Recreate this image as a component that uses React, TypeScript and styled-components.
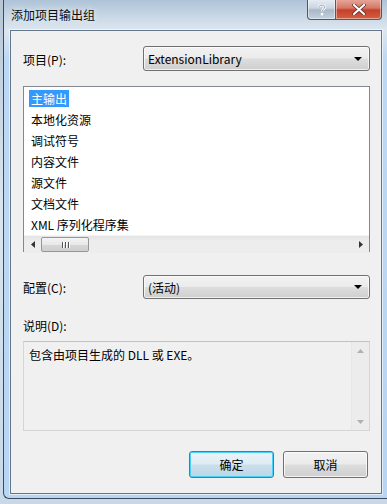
import styled, { createGlobalStyle } from "styled-components";

const GlobalStyle = createGlobalStyle`
  html, body {
    margin: 0;
    padding: 0;
    overflow: hidden;
    background: #8fa6bd;
  }
  body {
    font-family: "Noto Sans", "Noto Sans CJK SC", sans-serif;
    font-size: 12px;
    color: #000;
  }
`;

const uiFont = `"Noto Sans CJK SC", "Noto Sans", sans-serif`;

const Desktop = styled.div`
  width: 387px;
  height: 504px;
  padding-left: 3px;
  box-sizing: border-box;
  background: linear-gradient(180deg, #b7c6d6 0%, #d9e4ee 40%, #c8d8e8 100%);
  overflow: hidden;
`;

const Frame = styled.div`
  width: 395px;
  height: 499px;
  box-sizing: border-box;
  border-left: 1px solid #3e4a56;
  border-bottom: 1px solid #3e4a56;
  border-radius: 0 0 0 6px;
  background: linear-gradient(
    180deg,
    #aec3d8 0px,
    #c9d7e5 16px,
    #dce6ef 30px,
    #bcd8f4 60px,
    #b8d5f3 100%
  );
  display: flex;
  flex-direction: column;
  padding: 0 0 0 6px;
`;

const TitleBar = styled.div`
  height: 30px;
  display: flex;
  align-items: flex-start;
  justify-content: space-between;
  padding-right: 16px;
`;

const Title = styled.div`
  font-family: ${uiFont};
  font-size: 12px;
  line-height: 14px;
  padding-top: 8px;
  padding-left: 1px;
  color: #0b0b0b;
  text-shadow: 0 0 6px rgba(255, 255, 255, 0.9);
`;

const Captions = styled.div`
  display: flex;
  margin-top: -1px;
`;

const CaptionButton = styled.div<{ $close?: boolean }>`
  width: ${({ $close }) => ($close ? "46px" : "29px")};
  height: 21px;
  box-sizing: border-box;
  border: 1px solid #4b5a69;
  border-top: none;
  border-radius: ${({ $close }) => ($close ? "0 0 4px 0" : "0 0 0 4px")};
  border-left: ${({ $close }) => ($close ? "none" : "1px solid #4b5a69")};
  background: ${({ $close }) =>
    $close
      ? "linear-gradient(180deg, #e9a99c 0%, #d47866 45%, #c4412a 55%, #d2603f 100%)"
      : "linear-gradient(180deg, #e8eef5 0%, #cad5e1 45%, #a9b8c8 55%, #c3d1df 100%)"};
  box-shadow: inset 0 0 0 1px rgba(255, 255, 255, 0.45);
  display: flex;
  align-items: center;
  justify-content: center;
`;

const Client = styled.div`
  width: 372px;
  height: 464px;
  box-sizing: border-box;
  background: #f0f0f0;
  border: 1px solid #65778a;
  box-shadow: 0 0 0 1px rgba(255, 255, 255, 0.55);
  padding: 15px 11px 0 12px;
  display: flex;
  flex-direction: column;
`;

const FieldRow = styled.div<{ $gap?: number }>`
  display: flex;
  align-items: center;
  margin-top: ${({ $gap }) => $gap ?? 0}px;
`;

const Label = styled.div`
  width: 120px;
  font-family: ${uiFont};
  font-size: 12px;
  line-height: 16px;
  padding-top: 2px;
`;

const Combo = styled.div<{ $h: number }>`
  flex: 1;
  height: ${({ $h }) => $h}px;
  box-sizing: border-box;
  border: 1px solid #707070;
  border-radius: 3px;
  background: linear-gradient(180deg, #f2f2f2 0%, #ebebeb 48%, #dddddd 52%, #cfcfcf 100%);
  box-shadow: inset 0 0 0 1px rgba(255, 255, 255, 0.7);
  display: flex;
  align-items: center;
  justify-content: space-between;
  padding: 0 7px 0 4px;
  font-family: ${uiFont};
  font-size: 12px;
`;

const ArrowDown = styled.span`
  width: 0;
  height: 0;
  border-left: 4px solid transparent;
  border-right: 4px solid transparent;
  border-top: 4px solid #000;
`;

const ListBox = styled.div`
  margin-top: 15px;
  height: 166px;
  box-sizing: border-box;
  border: 1px solid #828790;
  background: #fff;
  display: flex;
  flex-direction: column;
`;

const ListItems = styled.div`
  flex: 1;
  padding: 1px 0 0 5px;
`;

const ListItem = styled.div`
  height: 21px;
  display: flex;
  align-items: center;
  font-family: ${uiFont};
  font-size: 12px;
`;

const ItemText = styled.span<{ $selected?: boolean }>`
  padding: 0 2px;
  line-height: 17px;
  background: ${({ $selected }) => ($selected ? "#3399ff" : "transparent")};
  color: ${({ $selected }) => ($selected ? "#fff" : "#000")};
`;

const HScroll = styled.div`
  height: 17px;
  background: linear-gradient(180deg, #e3e3e3 0%, #ededed 30%, #ededed 100%);
  border-top: 1px solid #f5f5f5;
  display: flex;
  align-items: center;
`;

const ScrollArrow = styled.div`
  width: 17px;
  height: 17px;
  display: flex;
  align-items: center;
  justify-content: center;
`;

const Thumb = styled.div`
  width: 48px;
  height: 15px;
  box-sizing: border-box;
  border: 1px solid #979797;
  border-radius: 2px;
  background: linear-gradient(180deg, #f4f4f4 0%, #e8e8e8 50%, #d6d6d6 51%, #cfcfcf 100%);
  display: flex;
  align-items: center;
  justify-content: center;
  gap: 2px;
`;

const Grip = styled.span`
  width: 1px;
  height: 6px;
  background: #555;
  box-shadow: 1px 0 0 #fff;
`;

const Track = styled.div`
  flex: 1;
`;

const DescLabel = styled.div`
  margin-top: 19px;
  font-family: ${uiFont};
  font-size: 12px;
  line-height: 16px;
`;

const DescBox = styled.div`
  margin-top: 7px;
  height: 90px;
  box-sizing: border-box;
  border: 1px solid #d5d5d5;
  border-top-color: #c2c2c2;
  background: #f0f0f0;
  display: flex;
`;

const DescText = styled.div`
  flex: 1;
  padding: 5px 5px;
  font-family: ${uiFont};
  font-size: 12px;
  line-height: 16px;
`;

const VScroll = styled.div`
  width: 17px;
  border-left: 1px solid #e6e6e6;
  background: #ececec;
  display: flex;
  flex-direction: column;
  justify-content: space-between;
`;

const ButtonRow = styled.div`
  margin-top: 20px;
  display: flex;
  justify-content: flex-end;
  gap: 9px;
  padding-right: 2px;
`;

const Button = styled.div<{ $default?: boolean }>`
  width: 85px;
  height: 27px;
  box-sizing: border-box;
  border: 1px solid ${({ $default }) => ($default ? "#3c7fb1" : "#707070")};
  border-radius: 3px;
  background: ${({ $default }) =>
    $default
      ? "linear-gradient(180deg, #eaf3f8 0%, #dfecf3 48%, #c9dfec 52%, #bcd6e6 100%)"
      : "linear-gradient(180deg, #f2f2f2 0%, #ebebeb 48%, #dddddd 52%, #cfcfcf 100%)"};
  box-shadow: ${({ $default }) =>
    $default ? "inset 0 0 0 1px #48d2fb" : "inset 0 0 0 1px rgba(255,255,255,0.75)"};
  display: flex;
  align-items: center;
  justify-content: center;
  font-family: ${uiFont};
  font-size: 12px;
`;

const items = ["主输出", "本地化资源", "调试符号", "内容文件", "源文件", "文档文件", "XML 序列化程序集"];

const Tri = ({ dir, color }: { dir: "l" | "r" | "u" | "d"; color: string }) => {
  const pts = {
    l: "4,0 4,7 0,3.5",
    r: "0,0 0,7 4,3.5",
    u: "0,4 7,4 3.5,0",
    d: "0,0 7,0 3.5,4",
  }[dir];
  const w = dir === "l" || dir === "r" ? 4 : 7;
  const h = dir === "l" || dir === "r" ? 7 : 4;
  return (
    <svg width={w} height={h} viewBox={`0 0 ${w} ${h}`}>
      <polygon points={pts} fill={color} />
    </svg>
  );
};

export default function App() {
  return (
    <>
      <GlobalStyle />
      <Desktop>
        <Frame>
          <TitleBar>
            <Title>添加项目输出组</Title>
            <Captions>
              <CaptionButton>
                <svg width="10" height="13" viewBox="0 0 10 13">
                  <path
                    d="M2 4 C2 1.5 8 1.5 8 4 C8 6 5 6 5 8.5"
                    stroke="#fff"
                    strokeWidth="2.4"
                    fill="none"
                  />
                  <rect x="3.8" y="10" width="2.4" height="2.4" fill="#fff" />
                  <path
                    d="M2 4 C2 1.5 8 1.5 8 4 C8 6 5 6 5 8.5"
                    stroke="#3d4a57"
                    strokeWidth="1"
                    fill="none"
                    opacity="0.5"
                  />
                </svg>
              </CaptionButton>
              <CaptionButton $close>
                <svg width="14" height="11" viewBox="0 0 14 11">
                  <path
                    d="M2 1 L12 10 M12 1 L2 10"
                    stroke="#5a2a22"
                    strokeWidth="3.6"
                    strokeLinecap="round"
                  />
                  <path
                    d="M2 1 L12 10 M12 1 L2 10"
                    stroke="#fff"
                    strokeWidth="2.2"
                    strokeLinecap="round"
                  />
                </svg>
              </CaptionButton>
            </Captions>
          </TitleBar>
          <Client>
            <FieldRow>
              <Label>项目(P):</Label>
              <Combo $h={25}>
                <span>ExtensionLibrary</span>
                <ArrowDown />
              </Combo>
            </FieldRow>
            <ListBox>
              <ListItems>
                {items.map((it, i) => (
                  <ListItem key={it}>
                    <ItemText $selected={i === 0}>{it}</ItemText>
                  </ListItem>
                ))}
              </ListItems>
              <HScroll>
                <ScrollArrow>
                  <Tri dir="l" color="#333" />
                </ScrollArrow>
                <Thumb>
                  <Grip />
                  <Grip />
                  <Grip />
                </Thumb>
                <Track />
                <ScrollArrow>
                  <Tri dir="r" color="#333" />
                </ScrollArrow>
              </HScroll>
            </ListBox>
            <FieldRow $gap={23}>
              <Label>配置(C):</Label>
              <Combo $h={24}>
                <span>(活动)</span>
                <ArrowDown />
              </Combo>
            </FieldRow>
            <DescLabel>说明(D):</DescLabel>
            <DescBox>
              <DescText>包含由项目生成的 DLL 或 EXE。</DescText>
              <VScroll>
                <ScrollArrow>
                  <Tri dir="u" color="#b0b0b0" />
                </ScrollArrow>
                <ScrollArrow>
                  <Tri dir="d" color="#b0b0b0" />
                </ScrollArrow>
              </VScroll>
            </DescBox>
            <ButtonRow>
              <Button $default>确定</Button>
              <Button>取消</Button>
            </ButtonRow>
          </Client>
        </Frame>
      </Desktop>
    </>
  );
}
